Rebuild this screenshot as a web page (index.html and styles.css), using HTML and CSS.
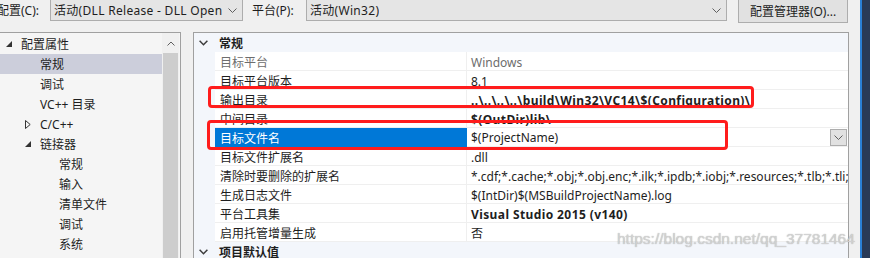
FILE: index.html
```html
<!DOCTYPE html>
<html lang="zh-CN">
<head>
<meta charset="utf-8">
<title>属性页</title>
<link rel="stylesheet" href="styles.css">
</head>
<body>
<div class="window">
  <div class="main">
    <div class="toolbar">
      <span class="lbl lbl-config">配置(C):</span>
      <div class="combo combo-config">
        <span class="combo-text">活动(DLL Release - DLL Open</span>
        <svg class="chev" width="9" height="5" viewBox="0 0 9 5"><path d="M0.5 0.5 L4.5 4.5 L8.5 0.5"/></svg>
      </div>
      <span class="lbl lbl-platform">平台(P):</span>
      <div class="combo combo-platform">
        <span class="combo-text">活动(Win32)</span>
        <svg class="chev" width="9" height="5" viewBox="0 0 9 5"><path d="M0.5 0.5 L4.5 4.5 L8.5 0.5"/></svg>
      </div>
      <div class="btn">配置管理器(O)...</div>
    </div>
    <div class="panes">
      <div class="tree-pane">
        <ul class="tree">
          <li class="l0"><span class="tw"><svg width="6" height="6" viewBox="0 0 6 6"><polygon class="tri-open" points="6,0 6,6 0,6"/></svg></span>配置属性</li>
          <li class="l1 sel"><span class="tw"></span>常规</li>
          <li class="l1"><span class="tw"></span>调试</li>
          <li class="l1"><span class="tw"></span>VC++ 目录</li>
          <li class="l1"><span class="tw"><svg width="6" height="9" viewBox="0 0 6 9"><polygon class="tri-closed" points="0.5,0.5 5.2,4.5 0.5,8.5"/></svg></span>C/C++</li>
          <li class="l1"><span class="tw"><svg width="6" height="6" viewBox="0 0 6 6"><polygon class="tri-open" points="6,0 6,6 0,6"/></svg></span>链接器</li>
          <li class="l2"><span class="tw"></span>常规</li>
          <li class="l2"><span class="tw"></span>输入</li>
          <li class="l2"><span class="tw"></span>清单文件</li>
          <li class="l2"><span class="tw"></span>调试</li>
          <li class="l2"><span class="tw"></span>系统</li>
        </ul>
        <div class="vscroll">
          <div class="vscroll-up"><svg class="chev" width="8" height="5" viewBox="0 0 8 5"><path d="M0.5 4.5 L4 1 L7.5 4.5"/></svg></div>
          <div class="vscroll-thumb"></div>
        </div>
      </div>
      <div class="grid-pane">
        <div class="cat">
          <svg class="cat-chev" width="9" height="6" viewBox="0 0 9 6"><path d="M0.6 0.8 L4.5 4.7 L8.4 0.8"/></svg>
          <span class="cat-text">常规</span>
        </div>
        <div class="prop disabled"><div class="gutter"></div><div class="name">目标平台</div><div class="val">Windows</div></div>
        <div class="prop"><div class="gutter"></div><div class="name">目标平台版本</div><div class="val">8.1</div></div>
        <div class="prop"><div class="gutter"></div><div class="name">输出目录</div><div class="val bold">..\..\..\..\build\Win32\VC14\$(Configuration)\</div></div>
        <div class="prop"><div class="gutter"></div><div class="name">中间目录</div><div class="val bold">$(OutDir)lib\</div></div>
        <div class="prop sel"><div class="gutter"></div><div class="name">目标文件名</div><div class="val"><span>$(ProjectName)</span><span class="dd"><svg class="chev" width="9" height="5" viewBox="0 0 9 5"><path d="M0.5 0.5 L4.5 4.5 L8.5 0.5"/></svg></span></div></div>
        <div class="prop"><div class="gutter"></div><div class="name">目标文件扩展名</div><div class="val">.dll</div></div>
        <div class="prop"><div class="gutter"></div><div class="name">清除时要删除的扩展名</div><div class="val">*.cdf;*.cache;*.obj;*.obj.enc;*.ilk;*.ipdb;*.iobj;*.resources;*.tlb;*.tli;*.tlh;*.tmp;*.rsp;*.pgc;*.pgd;*.meta;*.tlog</div></div>
        <div class="prop"><div class="gutter"></div><div class="name">生成日志文件</div><div class="val">$(IntDir)$(MSBuildProjectName).log</div></div>
        <div class="prop"><div class="gutter"></div><div class="name">平台工具集</div><div class="val bold">Visual Studio 2015 (v140)</div></div>
        <div class="prop"><div class="gutter"></div><div class="name">启用托管增量生成</div><div class="val">否</div></div>
        <div class="cat">
          <svg class="cat-chev" width="9" height="6" viewBox="0 0 9 6"><path d="M0.6 0.8 L4.5 4.7 L8.4 0.8"/></svg>
          <span class="cat-text">项目默认值</span>
        </div>
      </div>
    </div>
  </div>
  <div class="edge"></div>
</div>
<div class="mark mark-1"></div>
<div class="mark mark-2"></div>
<div class="watermark">https://blog.csdn.net/qq_37781464</div>
</body>
</html>
```
FILE: styles.css
```css
* { box-sizing: border-box; }

body {
  margin: 0;
  width: 870px;
  height: 258px;
  overflow: hidden;
  position: relative;
  background: #f0f0f0;
  color: #1e1e1e;
  font-family: "Noto Sans", "Noto Sans CJK SC", sans-serif;
  font-size: 12px;
  line-height: 18px;
}

.window { display: flex; height: 258px; }
.main { width: 860px; display: flex; flex-direction: column; }
.edge { width: 10px; background: #293a57; border-left: 2px solid #2a80d6; }

/* toolbar */
.toolbar { height: 32px; flex: none; display: flex; align-items: flex-start; }
.lbl { line-height: 20px; padding-top: 1px; white-space: nowrap; flex: none; }
.lbl-config { margin-left: -3px; width: 53px; }
.lbl-platform { margin-left: 9px; width: 54px; }

.combo {
  flex: none;
  height: 22px;
  margin-top: -1px;
  border: 1px solid #adadad;
  background: #e5e5e5;
  display: flex;
  align-items: center;
  justify-content: space-between;
  padding: 0 5px 0 3px;
  overflow: hidden;
}
.combo-text { white-space: nowrap; overflow: hidden; padding-top: 2px; letter-spacing: 0.3px; }
.combo-config { width: 193px; }
.combo-platform { width: 421px; }

.chev { flex: none; }
.chev path { fill: none; stroke: #5f5f5f; stroke-width: 1; }

.btn {
  flex: none;
  margin-left: 11px;
  margin-top: -1px;
  width: 110px;
  height: 24px;
  border: 1px solid #adadad;
  background: #e1e1e1;
  display: flex;
  align-items: center;
  justify-content: center;
  white-space: nowrap;
  padding-top: 1px;
}

/* panes */
.panes { flex: 1; display: flex; min-height: 0; }

.tree-pane {
  flex: none;
  margin-left: -1px;
  width: 182px;
  border: 1px solid #a0a0a0;
  border-bottom: none;
  background: #f5f5f5;
  display: flex;
}
.tree { width: 162px; margin: 0; padding: 1px 0 0; list-style: none; }
.tree li { height: 20px; line-height: 20px; padding-top: 1px; display: flex; align-items: center; white-space: nowrap; }
.tree li.l1 { padding-left: 19px; }
.tree li.l2 { padding-left: 38px; }
.tree li.sel { background: #cccedb; }
.tw { width: 21px; flex: none; display: flex; align-items: center; padding-left: 6px; margin-top: -1px; }
.tri-open { fill: #333333; }
.tri-closed { fill: none; stroke: #333333; stroke-width: 1; }

.vscroll { width: 17px; flex: none; display: flex; flex-direction: column; background: #f0f0f0; }
.vscroll-up { height: 20px; display: flex; align-items: center; justify-content: center; }
.vscroll-thumb { flex: 1; margin: 0 1px; background: #cdcdcd; }

.grid-pane {
  flex: none;
  margin-left: 12px;
  width: 656px;
  border: 1px solid #a0a0a0;
  border-bottom: none;
  background: #ffffff;
}

.cat {
  height: 19px;
  background: #f3f6fb;
  display: flex;
  align-items: center;
  font-weight: bold;
  color: #1e1e1e;
}
.cat-text { padding-top: 3px; }
.cat-chev { margin-left: 5px; margin-right: 11px; flex: none; }
.cat-chev path { fill: none; stroke: #3c3c3c; stroke-width: 1.5; }

.prop { display: grid; grid-template-columns: 21px 252px 1fr; height: 19px; }
.gutter { background: #f3f6fb; }
.name {
  border-bottom: 1px solid #efefef;
  border-right: 1px solid #efefef;
  padding-left: 5px;
  padding-top: 2px;
  white-space: nowrap;
  overflow: hidden;
}
.val {
  border-bottom: 1px solid #efefef;
  padding-left: 4px;
  padding-top: 2px;
  white-space: nowrap;
  overflow: hidden;
  display: flex;
  align-items: flex-start;
}
.val.bold { font-weight: bold; letter-spacing: 0.4px; }
.prop.disabled .name, .prop.disabled .val { color: #6d6d6d; }
.prop.sel .name { background: #0078d7; color: #ffffff; border-color: #0078d7; }
.prop.sel .val { align-items: center; padding-top: 0; }
.prop.sel .val > span:first-child { padding-top: 2px; }
.dd {
  margin-left: auto;
  margin-right: 1px;
  width: 17px;
  height: 17px;
  flex: none;
  border: 1px solid #adadad;
  background: #e1e1e1;
  display: flex;
  align-items: center;
  justify-content: center;
}

/* annotations drawn over the screenshot */
.mark {
  position: absolute;
  border: 3px solid #ff1c1c;
  border-radius: 4px;
}
.mark-1 { left: 208px; top: 86px; width: 546px; height: 22px; }
.mark-2 { left: 207px; top: 120px; width: 521px; height: 30px; }

.watermark {
  position: absolute;
  left: 617px;
  top: 229px;
  font-family: "Liberation Sans", Arial, sans-serif;
  font-size: 15.5px;
  line-height: 20px;
  color: rgba(215, 215, 215, 0.85);
  text-shadow: 0 0 1px rgba(110, 110, 110, 0.6);
  white-space: nowrap;
}
```
